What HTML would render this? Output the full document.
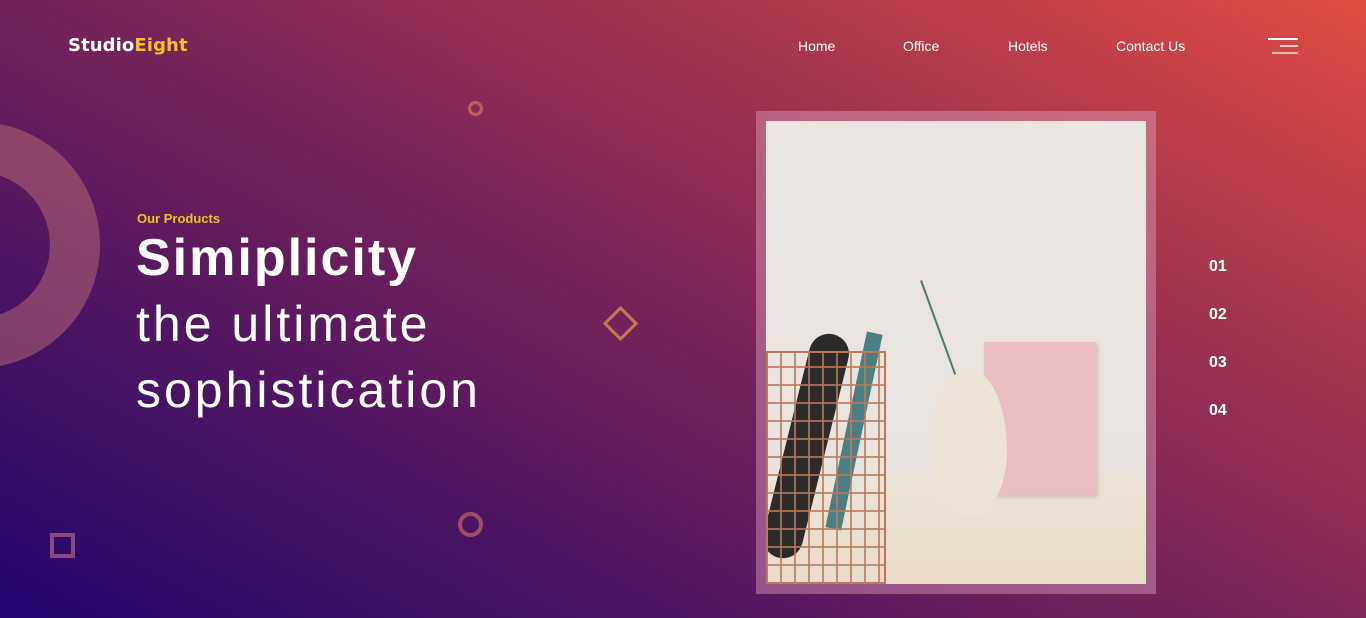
<!DOCTYPE html>
<html><head><meta charset="utf-8"><style>
*{margin:0;padding:0;box-sizing:border-box}
body{width:1366px;height:618px;overflow:hidden;position:relative;font-family:"Liberation Sans",sans-serif;
background:linear-gradient(28deg,#22066e 0%,#4a1462 25%,#74225a 47%,#a0334f 70%,#e04c42 100%);}
.a{position:absolute}
.logo{left:68px;top:35px;font-weight:bold;font-size:18px;color:#fff;font-family:"DejaVu Sans",sans-serif;letter-spacing:0.1px}
.logo span{color:#f0c32a}
.nav{top:38px;color:#fff;font-size:14px}
.num{left:1209px;color:#fff;font-weight:bold;font-size:16px}
</style></head><body>
<div class="a logo">Studio<span>Eight</span></div>
<div class="a nav" style="left:798px">Home</div>
<div class="a nav" style="left:903px">Office</div>
<div class="a nav" style="left:1008px">Hotels</div>
<div class="a nav" style="left:1116px">Contact Us</div>
<div class="a" style="left:1268px;top:38px;width:30px;height:2px;background:#fff"></div>
<div class="a" style="left:1280px;top:45px;width:18px;height:2px;background:#f4c7c0"></div>
<div class="a" style="left:1272px;top:52px;width:26px;height:2px;background:#f2b9b0"></div>
<div class="a" style="left:-146px;top:122px;width:246px;height:246px;border-radius:50%;border:50px solid rgba(200,120,120,0.45)"></div>
<div class="a" style="left:468px;top:101px;width:15px;height:15px;border-radius:50%;border:3px solid rgba(220,120,90,0.7)"></div>
<div class="a" style="left:458px;top:512px;width:25px;height:25px;border-radius:50%;border:4px solid rgba(200,100,100,0.7)"></div>
<div class="a" style="left:50px;top:533px;width:25px;height:25px;border:4px solid rgba(160,90,130,0.8)"></div>
<div class="a" style="left:608px;top:311px;width:25px;height:25px;border:3px solid rgba(220,140,80,0.8);transform:rotate(45deg)"></div>
<div class="a" style="left:137px;top:211px;color:#f0c32a;font-weight:bold;font-size:13px">Our Products</div>
<div class="a" style="left:136px;top:228px;color:#fff;font-weight:bold;font-size:52px;letter-spacing:2px">Simiplicity</div>
<div class="a" style="left:136px;top:291px;color:#fff;font-size:50px;letter-spacing:3px;line-height:66px">the ultimate<br>sophistication</div>
<div class="a" style="left:756px;top:111px;width:400px;height:483px;background:rgba(220,160,190,0.45)"></div>
<div class="a" style="left:766px;top:121px;width:380px;height:463px;overflow:hidden;background:linear-gradient(180deg,#ece6e2 0%,#e9e3df 75%,#ece2d4 79%,#e8dbc9 100%)">
 <div class="a" style="left:218px;top:221px;width:112px;height:153px;background:#e8bec2;box-shadow:2px 2px 4px rgba(0,0,0,.15)"></div>
 <div class="a" style="left:165px;top:248px;width:76px;height:147px;border-radius:50% 50% 45% 45%/55% 55% 45% 45%;background:#ece2d6"></div>
 <div class="a" style="left:20px;top:210px;width:40px;height:230px;background:#2b2b2b;transform:rotate(14deg);border-radius:20px"></div>
 <div class="a" style="left:80px;top:210px;width:16px;height:200px;background:#4c7f83;transform:rotate(12deg)"></div>
 <div class="a" style="left:0;top:230px;width:120px;height:233px;border:2px solid #b97a58;background:repeating-linear-gradient(90deg,transparent 0 12px,rgba(185,122,88,.8) 12px 14px),repeating-linear-gradient(0deg,transparent 0 16px,rgba(185,122,88,.8) 16px 18px)"></div>
 <div class="a" style="left:170px;top:150px;width:40px;height:100px;border-left:2px solid #4f7a68;transform:rotate(-20deg)"></div>
</div>
<div class="a num" style="top:258px">01</div>
<div class="a num" style="top:306px">02</div>
<div class="a num" style="top:354px">03</div>
<div class="a num" style="top:402px">04</div>
</body></html>
